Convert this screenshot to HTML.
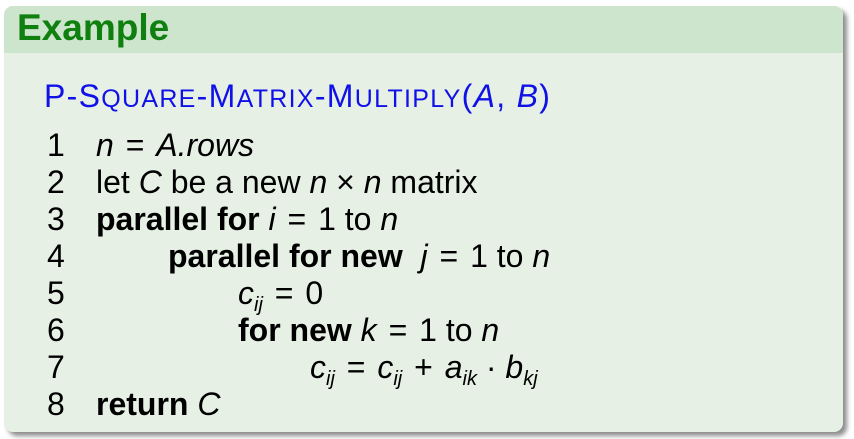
<!DOCTYPE html>
<html><head><style>
html,body{margin:0;padding:0;background:#fff;width:854px;height:439px;overflow:hidden}
.box{position:absolute;left:4px;top:6px;width:839px;height:426px;border-radius:9px;background:#e6f0e5;box-shadow:4px 4px 5px rgba(0,0,0,0.45);overflow:hidden}
.hd{position:absolute;left:0;top:0;width:100%;height:47px;background:#cde5cd}
.t{position:absolute;font-family:"Liberation Sans",Arial,sans-serif;white-space:nowrap;transform-origin:0 0;line-height:37px}
.ex{left:13px;top:0px;font-size:37px;font-weight:bold;color:#0f800f;line-height:43px}
.ti{left:40px;top:72px;font-size:32px;color:#1010e8;letter-spacing:1.3px}
.ti small{font-size:25px}
.l{font-size:32px;color:#000}
.n{left:43px}
i{font-style:italic}
.e{margin:0 3px}
sub{font-size:20px;vertical-align:-7px;line-height:0}
</style></head><body>
<div class="box">
<div class="hd"></div>
<div class="t ex">Example</div>
<div class="t ti">P-S<small>QUARE</small>-M<small>ATRIX</small>-M<small>ULTIPLY</small>(<i>A</i>, <i>B</i>)</div>

<div class="t l n" style="top:121px">1</div>
<div class="t l" style="left:92px;top:121px"><i>n</i> <span class="e">=</span> <i>A.rows</i></div>
<div class="t l n" style="top:158px">2</div>
<div class="t l" style="left:92px;top:158px">let <i>C</i> be a new <i>n</i> × <i>n</i> matrix</div>
<div class="t l n" style="top:195px">3</div>
<div class="t l" style="left:92px;top:195px"><b>parallel for</b> <i>i</i> <span class="e">=</span> 1 to <i>n</i></div>
<div class="t l n" style="top:232px">4</div>
<div class="t l" style="left:164px;top:232px"><b>parallel for new</b> &nbsp;<i>j</i> <span class="e">=</span> 1 to <i>n</i></div>
<div class="t l n" style="top:269px">5</div>
<div class="t l" style="left:234px;top:269px"><i>c<sub>ij</sub></i> <span class="e">=</span> 0</div>
<div class="t l n" style="top:306px">6</div>
<div class="t l" style="left:234px;top:306px"><b>for new</b> <i>k</i> <span class="e">=</span> 1 to <i>n</i></div>
<div class="t l n" style="top:343px">7</div>
<div class="t l" style="left:306px;top:343px"><i>c<sub>ij</sub></i> <span class="e">=</span> <i>c<sub>ij</sub></i> <span class="e">+</span> <i>a<sub>ik</sub></i> · <i>b<sub>kj</sub></i></div>
<div class="t l n" style="top:380px">8</div>
<div class="t l" style="left:92px;top:380px"><b>return</b> <i>C</i></div>
</div>
</body></html>
